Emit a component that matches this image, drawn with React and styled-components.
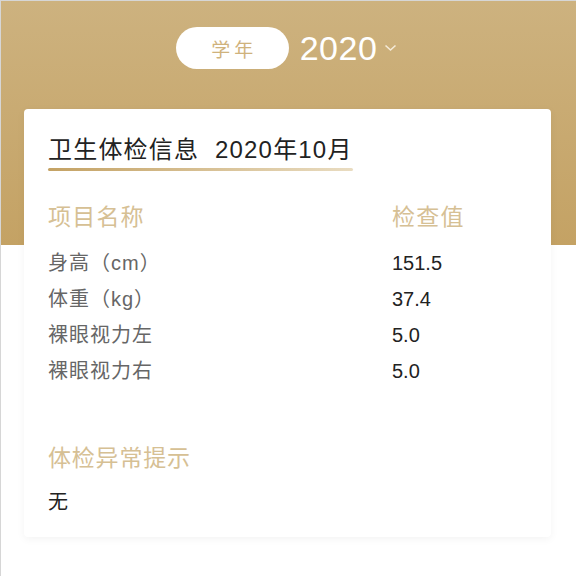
import React from 'react';
import styled, { createGlobalStyle } from 'styled-components';

const GlobalStyle = createGlobalStyle`
  html, body {
    margin: 0;
    padding: 0;
    background: #fff;
    font-family: "Liberation Sans", "Noto Sans CJK SC", sans-serif;
  }
`;

const Page = styled.div`
  position: relative;
  width: 576px;
  min-height: 576px;
  box-sizing: border-box;
  border-left: 1px solid #d6d6d6;
  border-top: 1px solid #d6d6d6;
  background: #fff;
`;

const Header = styled.div`
  height: 244px;
  background: linear-gradient(180deg, #cdb27f 0%, #c4a264 100%);
  display: flex;
  justify-content: center;
  padding-top: 26px;
  box-sizing: border-box;
`;

const YearBar = styled.div`
  display: flex;
  align-items: center;
  height: 42px;
  gap: 11px;
  margin-left: -4px;
`;

const Pill = styled.div`
  width: 113px;
  height: 42px;
  border-radius: 21px;
  background: #fff;
  color: #cfb27c;
  font-size: 19px;
  letter-spacing: 4px;
  text-indent: 4px;
  display: flex;
  align-items: center;
  justify-content: center;
`;

const Year = styled.div`
  color: #fff;
  font-size: 34px;
  display: flex;
  align-items: center;
  gap: 7px;
  line-height: 1;
  letter-spacing: 0.5px;
`;

const Card = styled.div`
  margin: -136px 25px 0 23px;
  background: #fff;
  border-radius: 4px;
  box-shadow: 0 2px 8px rgba(0, 0, 0, 0.05);
  padding: 26px 24px 20px;
  position: relative;
`;

const Title = styled.div`
  display: inline-block;
  font-size: 24px;
  letter-spacing: 1.2px;
  line-height: 30px;
  height: 30px;
  color: #222;
  position: relative;
  white-space: pre;
  &::after {
    content: '';
    position: absolute;
    left: 0;
    right: 0;
    top: 33px;
    height: 3px;
    border-radius: 2px;
    background: linear-gradient(90deg, #c4a264 0%, #e9dcc1 100%);
  }
`;

const Table = styled.div`
  margin-top: 37px;
  display: grid;
  grid-template-columns: 344px 1fr;
`;

const HeadCell = styled.div`
  font-size: 23px;
  letter-spacing: 1.2px;
  color: #d6c094;
  height: 30px;
  line-height: 30px;
  margin-bottom: 13px;
`;

const Cell = styled.div`
  font-size: 20px;
  letter-spacing: ${p => (p.$value ? '0' : '1px')};
  height: 36px;
  line-height: 36px;
  color: ${p => (p.$value ? '#222' : '#666')};
`;

const SubTitle = styled.div`
  margin-top: 54px;
  font-size: 23px;
  letter-spacing: 0.8px;
  color: #d6c094;
  line-height: 30px;
`;

const Remark = styled.div`
  margin-top: 14px;
  font-size: 20px;
  color: #222;
  line-height: 30px;
`;

const rows = [
  ['身高（cm）', '151.5'],
  ['体重（kg）', '37.4'],
  ['裸眼视力左', '5.0'],
  ['裸眼视力右', '5.0'],
];

function App() {
  return (
    <Page>
      <GlobalStyle />
      <Header>
        <YearBar>
          <Pill>学年</Pill>
          <Year>
            2020
            <svg width="13" height="8" viewBox="0 0 13 8">
              <path d="M1.5 1.5 L6.5 6 L11.5 1.5" fill="none" stroke="#f4ead8" strokeWidth="1.6" />
            </svg>
          </Year>
        </YearBar>
      </Header>
      <Card>
        <Title>{'卫生体检信息  2020年10月'}</Title>
        <Table>
          <HeadCell>项目名称</HeadCell>
          <HeadCell>检查值</HeadCell>
          {rows.map(([k, v]) => (
            <React.Fragment key={k}>
              <Cell>{k}</Cell>
              <Cell $value>{v}</Cell>
            </React.Fragment>
          ))}
        </Table>
        <SubTitle>体检异常提示</SubTitle>
        <Remark>无</Remark>
      </Card>
    </Page>
  );
}

export default App;
